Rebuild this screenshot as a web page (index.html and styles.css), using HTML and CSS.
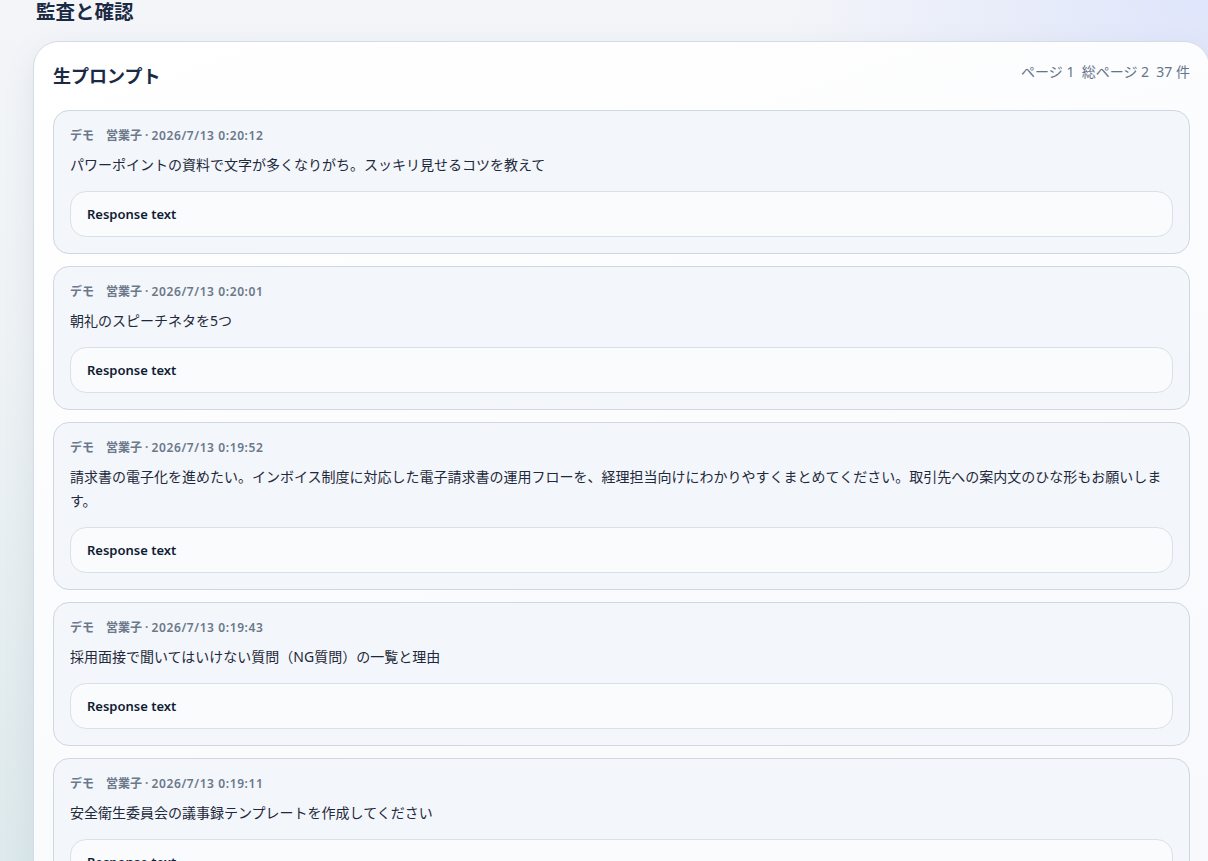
FILE: index.html
```html
<!DOCTYPE html>
<html lang="ja">
<head>
<meta charset="utf-8">
<title>監査と確認</title>
<link rel="stylesheet" href="styles.css">
</head>
<body>
<main class="page">
  <h1 class="page-title">監査と確認</h1>
  <section class="panel">
    <header class="panel-head">
      <h2 class="panel-title">生プロンプト</h2>
      <div class="panel-meta">ページ 1&nbsp; 総ページ 2&nbsp; 37 件</div>
    </header>
    <div class="list">
      <article class="item">
        <div class="item-meta">デモ　営業子 · <span class="ts">2026/7/13 0:20:12</span></div>
        <p class="item-prompt">パワーポイントの資料で文字が多くなりがち。スッキリ見せるコツを教えて</p>
        <div class="response">Response text</div>
      </article>
      <article class="item">
        <div class="item-meta">デモ　営業子 · <span class="ts">2026/7/13 0:20:01</span></div>
        <p class="item-prompt">朝礼のスピーチネタを5つ</p>
        <div class="response">Response text</div>
      </article>
      <article class="item">
        <div class="item-meta">デモ　営業子 · <span class="ts">2026/7/13 0:19:52</span></div>
        <p class="item-prompt">請求書の電子化を進めたい。インボイス制度に対応した電子請求書の運用フローを、経理担当向けにわかりやすくまとめてください。取引先への案内文のひな形もお願いします。</p>
        <div class="response">Response text</div>
      </article>
      <article class="item">
        <div class="item-meta">デモ　営業子 · <span class="ts">2026/7/13 0:19:43</span></div>
        <p class="item-prompt">採用面接で聞いてはいけない質問（NG質問）の一覧と理由</p>
        <div class="response">Response text</div>
      </article>
      <article class="item">
        <div class="item-meta">デモ　営業子 · <span class="ts">2026/7/13 0:19:11</span></div>
        <p class="item-prompt">安全衛生委員会の議事録テンプレートを作成してください</p>
        <div class="response">Response text</div>
      </article>
    </div>
  </section>
</main>
</body>
</html>
```

FILE: styles.css
```css
* { box-sizing: border-box; }
html, body { height: 100%; }
body {
  margin: 0;
  overflow: hidden;
  font-family: "Noto Sans", "Noto Sans CJK JP", sans-serif;
  color: #1e293b;
  background:
    radial-gradient(ellipse 420px 300px at 100% 0%, #dfe5fb 0%, rgba(223,229,251,0) 100%),
    linear-gradient(180deg, #f3f5f9 0%, #eef2f5 40%, #dde9ec 100%);
}
.page {
  padding: 0 0 0 33px;
}
.page-title {
  margin: -2px 0 15px 3px;
  font-size: 19.5px;
  line-height: 28px;
  font-weight: 700;
  color: #1b2a44;
}
.panel {
  width: 1177px;
  background: linear-gradient(160deg, #ffffff 0%, #fafbfd 60%, #f8f9fc 100%);
  border: 1px solid #d6dce4;
  border-radius: 26px;
  padding: 20px 19px;
  box-shadow: 0 10px 30px rgba(100, 116, 139, 0.12);
}
.panel-head {
  display: flex;
  justify-content: space-between;
  align-items: flex-start;
  margin-bottom: 20px;
}
.panel-title {
  margin: 0;
  font-size: 18px;
  line-height: 28px;
  font-weight: 700;
  color: #1b2a44;
}
.panel-meta {
  font-size: 14px;
  line-height: 20px;
  color: #64748b;
}
.list {
  display: flex;
  flex-direction: column;
  gap: 12px;
}
.item {
  background: #f3f6fa;
  border: 1px solid #cfd7e1;
  border-radius: 16px;
  padding: 16px;
}
.item-meta {
  font-size: 12px;
  line-height: 18px;
  font-weight: 600;
  color: #6b788b;
}
.item-meta .ts {
  letter-spacing: 0.6px;
}
.item-prompt {
  margin: 8px 0 14px;
  font-size: 14px;
  line-height: 24px;
  color: #1e293b;
}
.response {
  background: #f9fbfd;
  border: 1px solid #dbe1e8;
  border-radius: 16px;
  padding: 12px 16px;
  font-size: 13px;
  line-height: 20px;
  font-weight: 600;
  color: #0f1b33;
}
```
